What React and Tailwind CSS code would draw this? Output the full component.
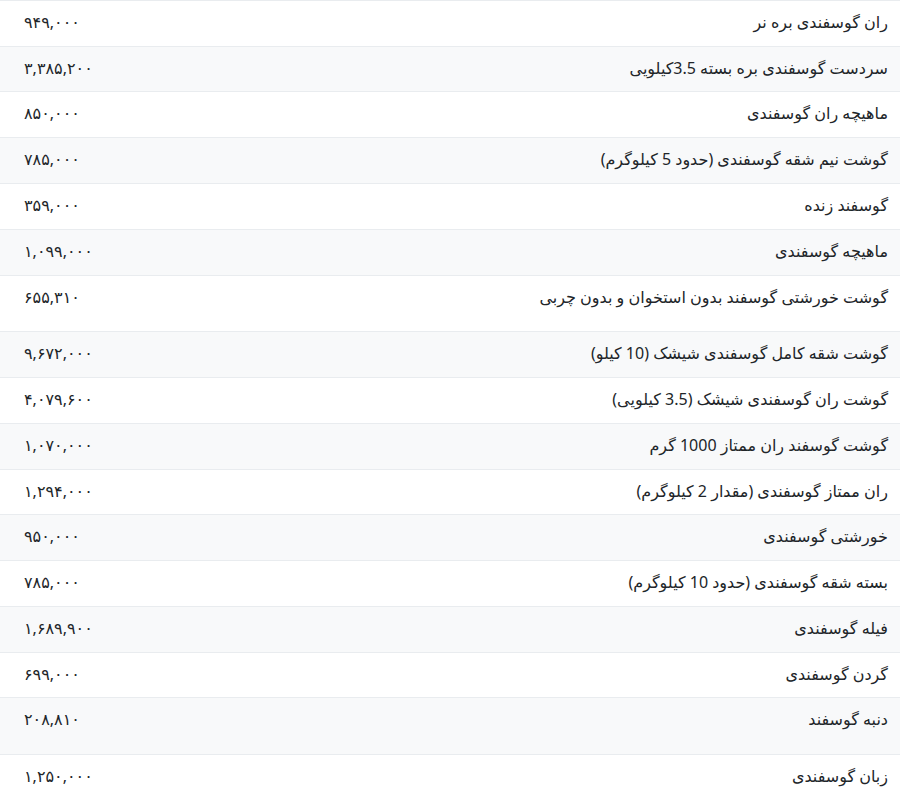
const rows = [
  { name: 'ران گوسفندی بره نر', price: '۹۴۹,۰۰۰', h: 'h-[46px]' },
  { name: 'سردست گوسفندی بره بسته 3.5کیلویی', price: '۳,۳۸۵,۲۰۰', h: 'h-[45px]' },
  { name: 'ماهیچه ران گوسفندی', price: '۸۵۰,۰۰۰', h: 'h-[46px]' },
  { name: 'گوشت نیم شقه گوسفندی (حدود 5 کیلوگرم)', price: '۷۸۵,۰۰۰', h: 'h-[46px]' },
  { name: 'گوسفند زنده', price: '۳۵۹,۰۰۰', h: 'h-[46px]' },
  { name: 'ماهیچه گوسفندی', price: '۱,۰۹۹,۰۰۰', h: 'h-[46px]' },
  { name: 'گوشت خورشتی گوسفند بدون استخوان و بدون چربی', price: '۶۵۵,۳۱۰', h: 'h-[56px]' },
  { name: 'گوشت شقه کامل گوسفندی شیشک (10 کیلو)', price: '۹,۶۷۲,۰۰۰', h: 'h-[46px]' },
  { name: 'گوشت ران گوسفندی شیشک (3.5 کیلویی)', price: '۴,۰۷۹,۶۰۰', h: 'h-[46px]' },
  { name: 'گوشت گوسفند ران ممتاز 1000 گرم', price: '۱,۰۷۰,۰۰۰', h: 'h-[46px]' },
  { name: 'ران ممتاز گوسفندی (مقدار 2 کیلوگرم)', price: '۱,۲۹۴,۰۰۰', h: 'h-[45px]' },
  { name: 'خورشتی گوسفندی', price: '۹۵۰,۰۰۰', h: 'h-[46px]' },
  { name: 'بسته شقه گوسفندی (حدود 10 کیلوگرم)', price: '۷۸۵,۰۰۰', h: 'h-[46px]' },
  { name: 'فیله گوسفندی', price: '۱,۶۸۹,۹۰۰', h: 'h-[46px]' },
  { name: 'گردن گوسفندی', price: '۶۹۹,۰۰۰', h: 'h-[45px]' },
  { name: 'دنبه گوسفند', price: '۲۰۸,۸۱۰', h: 'h-[57px]' },
  { name: 'زبان گوسفندی', price: '۱,۲۵۰,۰۰۰', h: 'h-[46px]' },
];

export default function App() {
  return (
    <div dir="rtl" className="w-[900px] bg-white font-['Noto_Sans','DejaVu_Sans',sans-serif] text-[#212529]">
      {rows.map((row, i) => (
        <div
          key={i}
          className={`flex items-start border-t border-[#e9ecef] ${row.h} ${i % 2 === 1 ? 'bg-[#f8f9fa]' : 'bg-white'}`}
        >
          <div className="flex-1 pr-3 pt-[9px] text-[16px] leading-6">{row.name}</div>
          <div className="w-[300px] pl-6 pt-[9px] text-[16px] leading-6 text-left">{row.price}</div>
        </div>
      ))}
    </div>
  );
}
